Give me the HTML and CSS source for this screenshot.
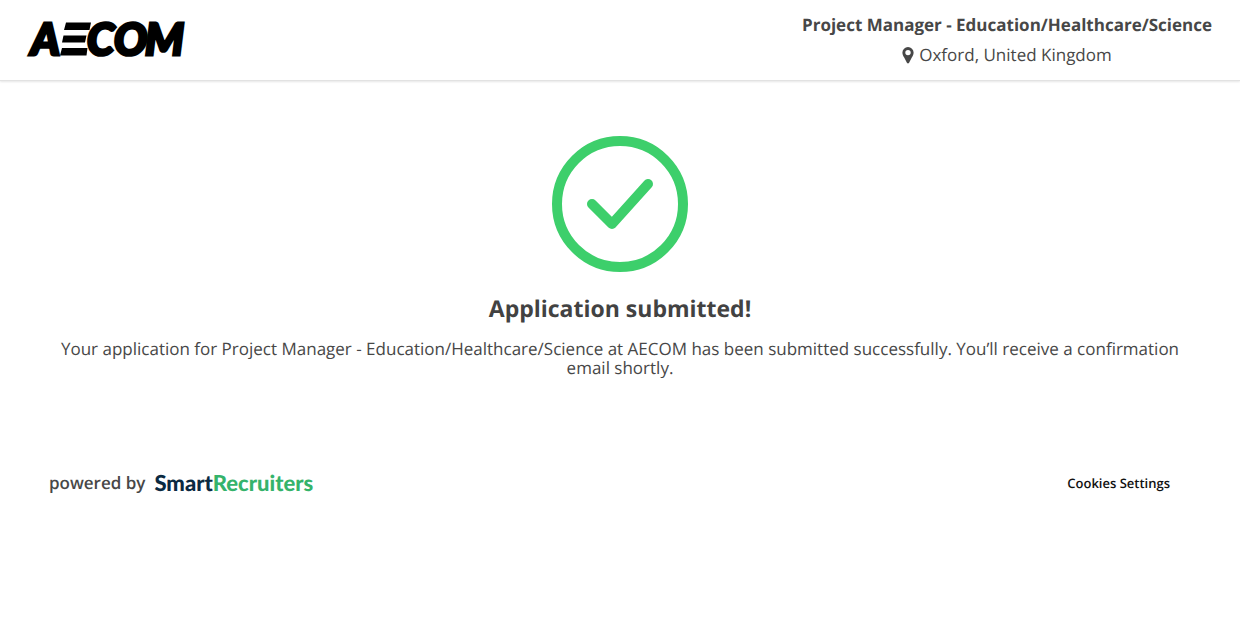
FILE: index.html
```html
<!DOCTYPE html>
<html lang="en">
<head>
<meta charset="utf-8">
<title>Application submitted</title>
<link rel="stylesheet" href="styles.css">
</head>
<body>
<header class="header">
  <svg class="logo" width="160" height="40" viewBox="0 0 160 40" role="img" aria-label="AECOM">
    <text class="logo-text" y="35" x="3 59 86 117">ACOM</text>
    <path d="M38 2.500H63L61.500 10H36ZM35.500 15.500H58.500L57 22.500H34ZM34 28H59.500L58.500 35.500H32Z"/>
  </svg>
  <div class="job">
    <h1 class="job-title">Project Manager - Education/Healthcare/Science</h1>
    <p class="job-place">
      <svg class="pin" width="12" height="18" viewBox="0 0 12 18" aria-hidden="true"><path fill-rule="evenodd" d="M6 1A5.600 5.600 0 0 0 .4 6.600C.4 9 1.300 10 2.200 11.600L4.900 16.700Q6 18.100 7.100 16.700L9.800 11.600C10.700 10 11.600 9 11.600 6.600A5.600 5.600 0 0 0 6 1ZM6 3.900A2.700 2.700 0 1 1 6 9.300A2.700 2.700 0 0 1 6 3.900Z"/></svg>
      <span>Oxford, United Kingdom</span>
    </p>
  </div>
</header>
<main class="main">
  <svg class="check" width="136" height="136" viewBox="0 0 136 136" aria-hidden="true">
    <circle cx="68" cy="68" r="63"/>
    <path d="M40 68L60 88L96 48"/>
  </svg>
  <h2 class="title">Application submitted!</h2>
  <p class="message">Your application for Project Manager - Education/Healthcare/Science at AECOM has been submitted successfully. You’ll receive a confirmation email shortly.</p>
</main>
<footer class="footer">
  <div class="powered">
    <span>powered by</span>
    <a class="brand" href="#"><span class="brand-dark">Smart</span><span class="brand-green">Recruiters</span></a>
  </div>
  <button class="cookies" type="button">Cookies Settings</button>
</footer>
</body>
</html>
```
FILE: styles.css
```css
* { box-sizing: border-box; }
body {
  margin: 0;
  background: #fff;
  color: #474747;
  font-family: "Open Sans", sans-serif;
  font-size: 17px;
  text-rendering: geometricPrecision;
}
h1, h2, p { margin: 0; }
.header {
  display: flex;
  justify-content: space-between;
  align-items: center;
  padding: 10px 28px;
  min-height: 81px;
  border-bottom: 1px solid #e2e2e2;
  box-shadow: 0 1px 2px rgba(0, 0, 0, .1);
}
.logo { overflow: visible; }
.logo-text {
  font-family: Lato, sans-serif;
  font-size: 44px;
  font-weight: 900;
  font-style: italic;
  stroke: #000;
  stroke-width: 3px;
}
.job { text-align: center; line-height: 30px; }
.job-title { font-size: 17px; font-weight: 700; }
.job-place {
  display: flex;
  justify-content: center;
  align-items: center;
  gap: 5px;
}
.pin { fill: #474747; }
.main {
  display: flex;
  flex-direction: column;
  align-items: center;
  padding: 55px 60px 0;
  text-align: center;
}
.check { fill: none; stroke: #3dcf6b; stroke-width: 10; stroke-linecap: round; stroke-linejoin: round; }
.title { margin-top: 19px; font-size: 23px; line-height: 34px; font-weight: 700; color: #424242; }
.message { margin-top: 14px; line-height: 19px; }
.footer {
  display: flex;
  justify-content: space-between;
  align-items: center;
  padding: 91px 70px 0 49px;
}
.powered { display: flex; align-items: center; gap: 9px; line-height: 30px; font-weight: 600; }
.brand {
  font-family: Lato, sans-serif;
  font-size: 22px;
  font-weight: 900;
  text-decoration: none;
}
.brand-dark { color: #0b2a42; }
.brand-green { color: #35b36b; }
.cookies {
  padding: 0;
  border: 0;
  background: none;
  color: #111;
  font: 600 13px "Open Sans", sans-serif;
  text-rendering: geometricPrecision;
}
```
